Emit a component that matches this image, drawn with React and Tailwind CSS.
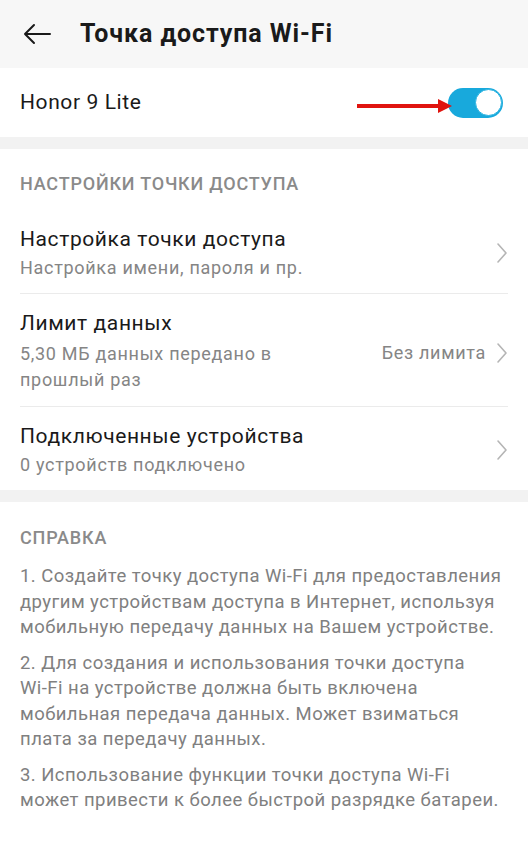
import React from "react";

const Chevron = () => (
  <svg width="12" height="22" viewBox="0 0 12 22" fill="none" className="shrink-0">
    <path d="M2 2l8 9-8 9" stroke="#b5b5b5" strokeWidth="1.6" strokeLinecap="round" strokeLinejoin="round" />
  </svg>
);

const SettingItem = ({ title, sub, divider }) => (
  <div className="px-5">
    <div className={`flex items-center pt-[15px] pb-[12px] ${divider ? "border-b border-[#ebebeb]" : ""}`}>
      <div className="flex-1">
        <div className="text-[21px] leading-[28px] tracking-[0.6px] text-[#1a1a1a]">{title}</div>
        <div className="mt-[2px] text-[18px] leading-[26px] tracking-[0.7px] text-[#858585]">{sub}</div>
      </div>
      <Chevron />
    </div>
  </div>
);

const WiFi = () => <span className="whitespace-nowrap">Wi-Fi</span>;

const helpText = [
  <>1. Создайте точку доступа <WiFi /> для предоставления другим устройствам доступа в Интернет, используя мобильную передачу данных на Вашем устройстве.</>,
  <>2. Для создания и использования точки доступа <WiFi /> на устройстве должна быть включена мобильная передача данных. Может взиматься плата за передачу данных.</>,
  <>3. Использование функции точки доступа <WiFi /> может привести к более быстрой разрядке батареи.</>,
];

export default function App() {
  return (
    <div className="w-[528px] h-[845px] overflow-hidden bg-[#f2f2f2] font-['Roboto','Noto_Sans',sans-serif]">
      {/* top bar */}
      <div className="h-[68px] bg-[#f7f7f7] flex items-center">
        <svg width="28" height="22" viewBox="0 0 28 22" fill="none" className="ml-[23px]">
          <path d="M27 11H2M11 2L2 11l9 9" stroke="#1a1a1a" strokeWidth="2" strokeLinecap="round" strokeLinejoin="round" />
        </svg>
        <span className="ml-[29px] text-[25px] font-bold text-[#1a1a1a] tracking-[0.9px]">Точка доступа Wi-Fi</span>
      </div>

      {/* hotspot switch */}
      <div className="h-[69px] bg-white flex items-center pl-5 pr-[25px]">
        <span className="flex-1 text-[21px] tracking-[0.6px] text-[#1a1a1a]">Honor 9 Lite</span>
        <div className="relative flex items-center">
          <svg width="98" height="16" viewBox="0 0 98 16" className="absolute right-[50px] top-[10px]">
            <path d="M2 8H86" stroke="#e0140f" strokeWidth="4" />
            <path d="M83 1L97 8L83 15Z" fill="#e0140f" />
          </svg>
          <div className="w-[55px] h-[30px] rounded-full bg-[#18a9dc] flex items-center justify-end pr-[1px]">
            <div className="w-[27px] h-[27px] rounded-full bg-white border-[1.5px] border-[#2ab4e2]" />
          </div>
        </div>
      </div>

      {/* hotspot settings */}
      <div className="mt-[12px] bg-white">
        <div className="px-5 pt-[25px] pb-[16px] text-[18px] leading-[20px] tracking-[0.8px] font-medium text-[#8a8a8a]">
          НАСТРОЙКИ ТОЧКИ ДОСТУПА
        </div>
        <SettingItem title="Настройка точки доступа" sub="Настройка имени, пароля и пр." divider />
        <div className="px-5">
          <div className="pt-[15px] pb-[13px] border-b border-[#ebebeb]">
            <div className="text-[21px] leading-[28px] tracking-[0.6px] text-[#1a1a1a]">Лимит данных</div>
            <div className="mt-[4px] flex items-start">
              <div className="w-[300px] text-[18px] leading-[26px] tracking-[0.7px] text-[#858585]">
                5,30 МБ данных передано в прошлый раз
              </div>
              <div className="flex-1 flex items-center justify-end gap-[10px] text-[18px] leading-[24px] tracking-[0.7px] text-[#858585]">
                <span>Без лимита</span>
                <Chevron />
              </div>
            </div>
          </div>
        </div>
        <SettingItem title="Подключенные устройства" sub="0 устройств подключено" />
      </div>

      {/* help */}
      <div className="mt-[12px] bg-white h-[400px] px-5 pt-[26px]">
        <div className="text-[18px] leading-[20px] tracking-[0.8px] font-medium text-[#8a8a8a]">СПРАВКА</div>
        <div className="mt-[16px] flex flex-col gap-[10px]">
          {helpText.map((t, i) => (
            <p key={i} className="text-[18.5px] leading-[25.5px] tracking-[0.45px] text-[#808080]">{t}</p>
          ))}
        </div>
      </div>
    </div>
  );
}
